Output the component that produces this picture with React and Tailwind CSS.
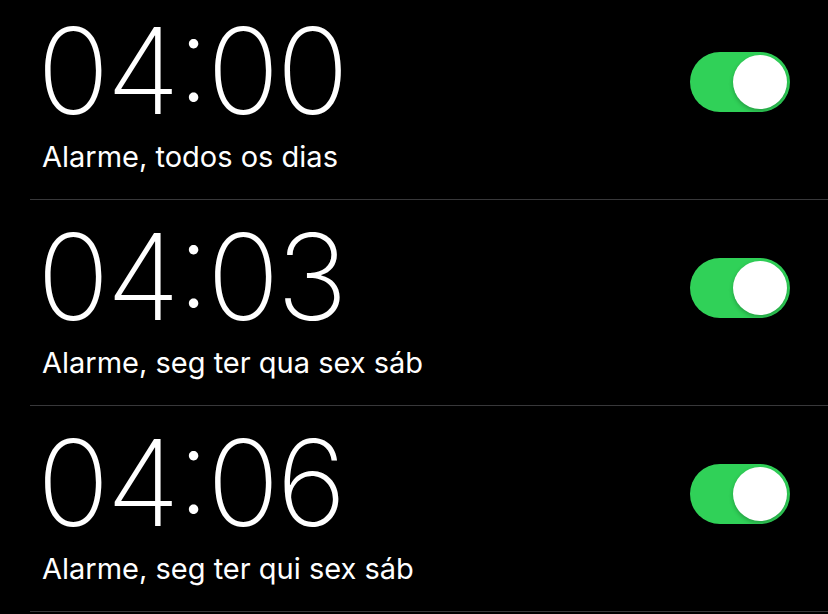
import React from 'react';

const alarms = [
  { time: '04:00', label: 'Alarme, todos os dias', on: true },
  { time: '04:03', label: 'Alarme, seg ter qua sex sáb', on: true },
  { time: '04:06', label: 'Alarme, seg ter qui sex sáb', on: true },
];

function Toggle({ on }) {
  return (
    <div className={`flex h-[60px] w-[100px] items-center rounded-full p-[3px] ${on ? 'justify-end bg-[#30d158]' : 'justify-start bg-[#39393d]'}`}>
      <div className="h-[54px] w-[54px] rounded-full bg-white shadow-[0_2px_4px_rgba(0,0,0,0.25)]" />
    </div>
  );
}

export default function App() {
  return (
    <div className="h-[614px] w-full overflow-hidden bg-black text-white" style={{ fontFamily: 'Inter, "Liberation Sans", sans-serif' }}>
      <div className="-mt-[6px]">
        {alarms.map((a) => (
          <div key={a.time} className="ml-[30px] flex h-[206px] items-start justify-between border-b border-[#38383a] pl-[12px] pr-[38px]">
            <div className="flex flex-col pt-[17px]">
              <div className="-ml-[5px] text-[120px] font-extralight leading-none tracking-[-3px] [font-feature-settings:'calt'_1,'case'_1]">{a.time}</div>
              <div className="mt-[11px] text-[29px] leading-none">{a.label}</div>
            </div>
            <div className="mt-[58px]">
              <Toggle on={a.on} />
            </div>
          </div>
        ))}
      </div>
    </div>
  );
}
